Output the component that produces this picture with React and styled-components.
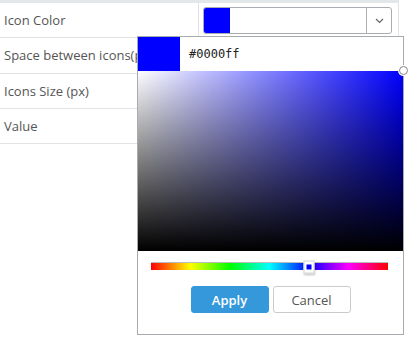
import React from "react";
import styled, { createGlobalStyle } from "styled-components";

const Global = createGlobalStyle`
  html, body { margin: 0; padding: 0; background: #fff; }
  body { font-family: "Open Sans", "Liberation Sans", sans-serif; width: 408px; height: 340px; overflow: hidden; }
`;

const Page = styled.div`
  position: relative;
  width: 408px;
  height: 340px;
`;

const Table = styled.div`
  width: 399px;
  border-top: 3px solid #e3e7ea;
`;

const Row = styled.div`
  display: grid;
  grid-template-columns: 199px 200px;
  height: 35.33px;
  box-sizing: border-box;
  border-bottom: 1px solid #dfe3e6;
`;

const Label = styled.div`
  display: flex;
  align-items: center;
  padding-left: 4px;
  font-size: 13px;
  color: #555;
  white-space: nowrap;
  overflow: hidden;
  border-right: 1px solid #dfe3e6;
`;

const ValueCell = styled.div`
  display: flex;
  align-items: center;
  padding-left: 4px;
  border-right: ${(p) => (p.$edge ? "1px solid #dfe3e6" : "none")};
`;

const Select = styled.div`
  display: flex;
  width: 189px;
  height: 27px;
  box-sizing: border-box;
  border: 1px solid #a9adb1;
  border-radius: 3px;
  overflow: hidden;
  margin-top: 1px;
`;

const SelectSwatch = styled.div`
  width: 26px;
  background: #0000ff;
`;

const SelectFill = styled.div`
  flex: 1;
`;

const Caret = styled.div`
  width: 24px;
  border-left: 1px solid #a9adb1;
  display: flex;
  align-items: center;
  justify-content: center;
`;

const Popup = styled.div`
  position: absolute;
  left: 137px;
  top: 36px;
  width: 267px;
  height: 299px;
  box-sizing: border-box;
  border: 1px solid #a7abaf;
  background: #fff;
  display: flex;
  flex-direction: column;
`;

const Header = styled.div`
  display: flex;
  align-items: center;
  height: 34px;
`;

const BigSwatch = styled.div`
  width: 42px;
  height: 34px;
  background: #0000ff;
`;

const Hex = styled.div`
  margin-left: 9px;
  font-family: "DejaVu Sans Mono", "Liberation Mono", monospace;
  font-size: 12px;
  color: #222;
`;

const Field = styled.div`
  position: relative;
  height: 180px;
  background: linear-gradient(to top, #000, rgba(0, 0, 0, 0)),
    linear-gradient(to right, #fff, #0000ff);
`;

const FieldHandle = styled.div`
  position: absolute;
  right: -5px;
  top: -5px;
  width: 7px;
  height: 7px;
  border-radius: 50%;
  border: 1px solid #888;
  background: #fff;
  box-shadow: 0 0 0 1px #fff;
`;

const HueWrap = styled.div`
  padding: 11px 15px 0 13px;
`;

const Hue = styled.div`
  position: relative;
  height: 8px;
  background: linear-gradient(
    to right,
    #f00 0%,
    #ff0 16.67%,
    #0f0 33.33%,
    #0ff 50%,
    #00f 66.67%,
    #f0f 83.33%,
    #f00 100%
  );
  border-top: 1px solid #bbb;
  box-sizing: border-box;
`;

const HueHandle = styled.div`
  position: absolute;
  left: 66.67%;
  top: 50%;
  width: 11px;
  height: 13px;
  transform: translate(-50%, -50%);
  box-sizing: border-box;
  background: #fff;
  border: 1px solid #d4d4d4;
  box-shadow: 0 1px 2px rgba(0, 0, 0, 0.25);
  display: flex;
  align-items: center;
  justify-content: center;
  &::after {
    content: "";
    width: 5px;
    height: 5px;
    background: #0000ff;
  }
`;

const Buttons = styled.div`
  display: flex;
  justify-content: center;
  gap: 4px;
  margin-top: 16px;
`;

const Button = styled.button`
  width: 78px;
  height: 27px;
  box-sizing: border-box;
  border-radius: 3px;
  font-family: "Open Sans", "Liberation Sans", sans-serif;
  font-size: 13px;
  padding: 0;
  cursor: pointer;
  background: ${(p) => (p.$primary ? "#3598db" : "#fff")};
  color: ${(p) => (p.$primary ? "#fff" : "#555")};
  border: 1px solid ${(p) => (p.$primary ? "#3598db" : "#c8cbce")};
  font-weight: ${(p) => (p.$primary ? 600 : 400)};
`;

const rows = ["Icon Color", "Space between icons(px)", "Icons Size (px)", "Value"];

export default function App() {
  return (
    <Page>
      <Global />
      <Table>
        {rows.map((r, i) => (
          <Row key={r}>
            <Label>{r}</Label>
            <ValueCell $edge={i === 0}>
              {i === 0 && (
                <Select>
                  <SelectSwatch />
                  <SelectFill />
                  <Caret>
                    <svg width="9" height="6" viewBox="0 0 9 6">
                      <path d="M1 1 L4.5 4.5 L8 1" fill="none" stroke="#666" strokeWidth="1.2" />
                    </svg>
                  </Caret>
                </Select>
              )}
            </ValueCell>
          </Row>
        ))}
      </Table>
      <Popup>
        <Header>
          <BigSwatch />
          <Hex>#0000ff</Hex>
        </Header>
        <Field>
          <FieldHandle />
        </Field>
        <HueWrap>
          <Hue>
            <HueHandle />
          </Hue>
        </HueWrap>
        <Buttons>
          <Button $primary>Apply</Button>
          <Button>Cancel</Button>
        </Buttons>
      </Popup>
    </Page>
  );
}
